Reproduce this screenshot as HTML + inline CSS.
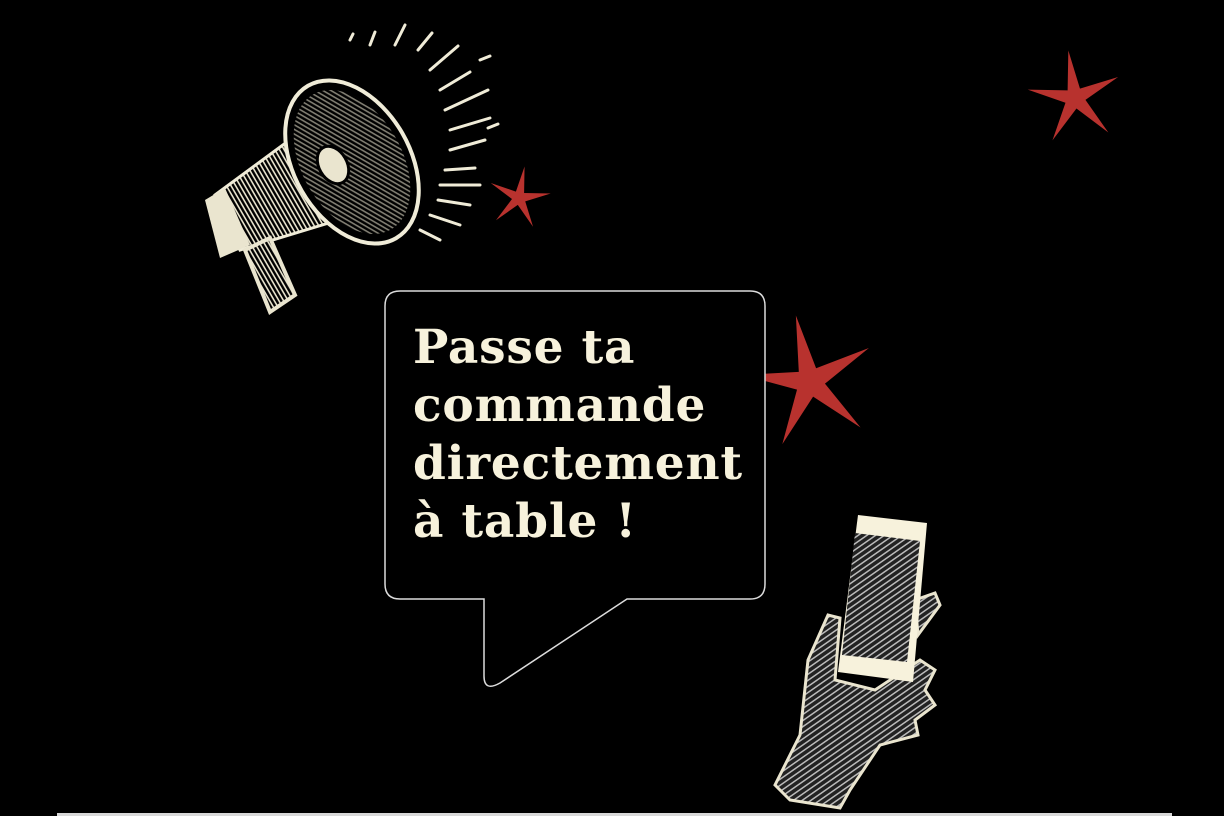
<!DOCTYPE html>
<html><head><meta charset="utf-8"><style>
html,body{margin:0;padding:0;background:#000;}
body{width:1224px;height:816px;position:relative;overflow:hidden;}
.t{position:absolute;left:413px;top:319px;font-family:"DejaVu Serif",serif;font-weight:bold;font-size:47px;line-height:58px;color:#f7f2dc;letter-spacing:0.8px;white-space:nowrap;}
.line{position:absolute;left:57px;top:813px;width:1115px;height:3px;background:#d8d8d8;}
</style></head><body>
<svg width="1224" height="816" style="position:absolute;left:0;top:0">
<defs>
<polygon id="st" points="0,-1 0.13,-0.18 0.951,-0.309 0.21,0.07 0.588,0.809 0,0.22 -0.588,0.809 -0.21,0.07 -0.951,-0.309 -0.13,-0.18"/>
<pattern id="h" width="4" height="4" patternUnits="userSpaceOnUse" patternTransform="rotate(60)"><rect width="4" height="4" fill="#000"/><rect width="4" height="1.6" fill="#eae5cf"/></pattern>
<pattern id="h2" width="5" height="5" patternUnits="userSpaceOnUse" patternTransform="rotate(-35)"><rect width="5" height="5" fill="#222"/><rect width="5" height="1.5" fill="#bbb"/></pattern>
</defs>
<use href="#st" transform="translate(519,198) rotate(10) scale(32)" fill="#b8322e"/>
<use href="#st" transform="translate(1075,98) rotate(-8) scale(48)" fill="#b8322e"/>
<use href="#st" transform="translate(810,382) rotate(-12) scale(68)" fill="#b8322e"/>
<g stroke="#f0ecd8" stroke-width="3" stroke-linecap="round">
<line x1="370" y1="45" x2="375" y2="32"/><line x1="395" y1="45" x2="405" y2="25"/><line x1="418" y1="50" x2="432" y2="33"/>
<line x1="430" y1="70" x2="458" y2="46"/><line x1="440" y1="90" x2="470" y2="72"/><line x1="445" y1="110" x2="488" y2="90"/>
<line x1="450" y1="130" x2="490" y2="118"/><line x1="450" y1="150" x2="485" y2="140"/><line x1="445" y1="170" x2="475" y2="168"/>
<line x1="440" y1="185" x2="480" y2="185"/><line x1="438" y1="200" x2="470" y2="205"/><line x1="430" y1="215" x2="460" y2="225"/>
<line x1="420" y1="230" x2="440" y2="240"/><line x1="480" y1="60" x2="490" y2="56"/><line x1="488" y1="128" x2="498" y2="124"/>
<line x1="350" y1="40" x2="353" y2="34"/>
</g>
<polygon points="215,195 310,125 355,215 240,250" fill="url(#h)" stroke="#f0ecd8" stroke-width="3"/>
<path d="M205,200 L225,188 L250,245 L220,258 Z" fill="#eae5cf"/>
<path d="M245,250 L270,238 L295,295 L270,312 Z" fill="url(#h)" stroke="#eae5cf" stroke-width="4"/>
<ellipse cx="352" cy="162" rx="58" ry="88" transform="rotate(-30 352 162)" fill="#000" stroke="#f0ecd8" stroke-width="4"/>
<ellipse cx="352" cy="162" rx="50" ry="78" transform="rotate(-30 352 162)" fill="url(#h)" opacity="0.55"/>
<ellipse cx="333" cy="165" rx="14" ry="20" transform="rotate(-30 333 165)" fill="#eae5cf" stroke="#000" stroke-width="3"/>
<path d="M775,785 L800,735 L808,660 L828,615 L840,618 L835,680 L875,690 L920,660 L935,670 L925,690 L935,705 L915,720 L918,735 L880,745 L850,790 L840,808 L790,800 Z" fill="url(#h2)" stroke="#eae5cf" stroke-width="3"/>
<path d="M915,600 L935,593 L940,605 L918,635 Z" fill="url(#h2)" stroke="#eae5cf" stroke-width="3"/>
<polygon points="858,515 927,523 913,682 838,672" fill="#f7f2dc"/>
<polygon points="855,533 920,541 907,662 842,655" fill="url(#h2)"/>
<path d="M400,291 H750 Q765,291 765,306 V584 Q765,599 750,599 H627 L500,683 Q484,692 484,676 V599 H400 Q385,599 385,584 V306 Q385,291 400,291 Z" fill="#000" stroke="#dcdcdc" stroke-width="1.5"/>
</svg>
<div class="t">Passe ta<br>commande<br>directement<br>à table !</div>
<div class="line"></div>
</body></html>
